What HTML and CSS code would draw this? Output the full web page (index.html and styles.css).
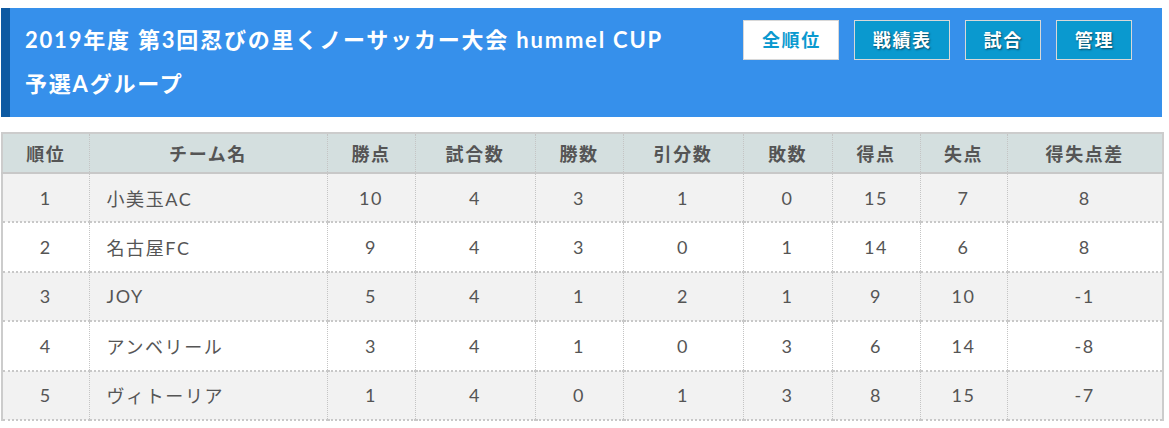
FILE: index.html
```html
<!DOCTYPE html>
<html lang="ja">
<head>
<meta charset="utf-8">
<title>予選Aグループ</title>
<link rel="stylesheet" href="styles.css">
</head>
<body>
<div class="page">
  <header class="hero">
    <h1 class="hero-title">2019年度 第3回忍びの里くノーサッカー大会 hummel CUP<br>予選Aグループ</h1>
    <nav class="hero-nav">
      <a class="btn btn-active" href="#">全順位</a>
      <a class="btn" href="#">戦績表</a>
      <a class="btn" href="#">試合</a>
      <a class="btn" href="#">管理</a>
    </nav>
  </header>
  <table class="standings">
    <colgroup>
      <col class="c-rank"><col class="c-team"><col class="c-pts"><col class="c-games"><col class="c-win"><col class="c-draw"><col class="c-loss"><col class="c-gf"><col class="c-ga"><col class="c-gd">
    </colgroup>
    <thead>
      <tr><th>順位</th><th>チーム名</th><th>勝点</th><th>試合数</th><th>勝数</th><th>引分数</th><th>敗数</th><th>得点</th><th>失点</th><th>得失点差</th></tr>
    </thead>
    <tbody>
      <tr><td>1</td><td class="team">小美玉AC</td><td>10</td><td>4</td><td>3</td><td>1</td><td>0</td><td>15</td><td>7</td><td>8</td></tr>
      <tr><td>2</td><td class="team">名古屋FC</td><td>9</td><td>4</td><td>3</td><td>0</td><td>1</td><td>14</td><td>6</td><td>8</td></tr>
      <tr><td>3</td><td class="team">JOY</td><td>5</td><td>4</td><td>1</td><td>2</td><td>1</td><td>9</td><td>10</td><td>-1</td></tr>
      <tr><td>4</td><td class="team">アンベリール</td><td>3</td><td>4</td><td>1</td><td>0</td><td>3</td><td>6</td><td>14</td><td>-8</td></tr>
      <tr><td>5</td><td class="team">ヴィトーリア</td><td>1</td><td>4</td><td>0</td><td>1</td><td>3</td><td>8</td><td>15</td><td>-7</td></tr>
    </tbody>
  </table>
</div>
</body>
</html>
```

FILE: styles.css
```css
html, body {
  margin: 0;
  padding: 0;
  background: #fff;
}

body {
  font-family: Lato, "Noto Sans CJK JP", sans-serif;
  letter-spacing: 0.1em;
  color: #555;
}

.page {
  width: 1161px;
  padding: 8px 0 0 1px;
}

.hero {
  display: flex;
  justify-content: space-between;
  align-items: flex-start;
  height: 109px;
  box-sizing: border-box;
  background: #3690eb;
  border-left: 9px solid #0e5aa2;
  padding-left: 15px;
}

.hero-title {
  margin: 0;
  padding-top: 10px;
  font-size: 22px;
  font-weight: 700;
  letter-spacing: 1.8px;
  line-height: 44px;
  color: #fff;
}

.hero-nav {
  display: flex;
  gap: 15px;
  margin-top: 12px;
  margin-right: 30px;
}

.btn {
  display: block;
  height: 40px;
  box-sizing: border-box;
  padding: 0 17px 0 18px;
  border: 1px solid #d8d8d8;
  background: #0a99cf;
  color: #fff;
  font-size: 18px;
  font-weight: 700;
  line-height: 38px;
  text-decoration: none;
  text-shadow: 1px 1px 2px rgba(0, 0, 0, 0.55);
}

.btn-active {
  background: #fff;
  color: #0a99cf;
  text-shadow: none;
}

.standings {
  margin-top: 15px;
  width: 1161px;
  table-layout: fixed;
  border-collapse: collapse;
  border-top: 2px solid #cccccc;
  border-left: 2px solid #cccccc;
  border-right: 2px solid #cccccc;
  font-size: 18px;
}

.c-rank { width: 87px; }
.c-team { width: 238px; }
.c-pts { width: 88px; }
.c-games { width: 120px; }
.c-win { width: 88px; }
.c-draw { width: 120px; }
.c-loss { width: 89px; }
.c-gf { width: 88px; }
.c-ga { width: 87px; }
.c-gd { width: 156px; }

.standings th {
  height: 38px;
  padding: 0;
  background: #d4dfdf;
  font-weight: 700;
  color: #555;
  text-align: center;
  border-bottom: 2px solid #c8c8c8;
  border-left: 1px dotted #c4c4c4;
  border-right: 1px dotted #c4c4c4;
}

.standings td {
  height: 47.4px;
  padding: 0;
  text-align: center;
  color: #555;
  border-bottom: 2px dotted #c8c8c8;
  border-left: 1px dotted #c4c4c4;
  border-right: 1px dotted #c4c4c4;
}

.standings tbody tr:nth-child(odd) td {
  background: #f2f2f2;
}

.standings tbody tr:nth-child(even) td {
  background: #fff;
}

.standings td.team {
  text-align: left;
  padding-left: 17px;
}
```
